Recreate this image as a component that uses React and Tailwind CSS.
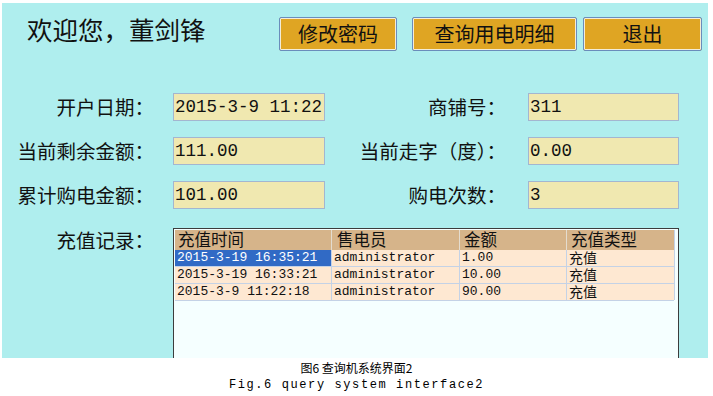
import React from 'react';

const cjk = "font-['Noto_Sans_CJK_SC',sans-serif]";
const tight = "font-['Liberation_Sans','Noto_Sans_CJK_SC',sans-serif]";
const mono = "font-['Liberation_Mono',monospace]";

const records = [
    { time: '2015-3-19 16:35:21', seller: 'administrator', amount: '1.00', type: '充值' },
    { time: '2015-3-19 16:33:21', seller: 'administrator', amount: '10.00', type: '充值' },
    { time: '2015-3-9 11:22:18', seller: 'administrator', amount: '90.00', type: '充值' },
];

const Field = ({ value }) => (
    <div className={`h-[28px] bg-[#F0E8B0] border border-[#a3b6d0] pl-[1px] text-[17.5px] leading-[26px] text-[#111] ${mono}`}>
        {value}
    </div>
);

const Button = ({ label, className }) => (
    <button
        className={`h-[34px] bg-[#DFA523] border border-[#6a8dbb] shadow-[inset_0_0_0_1px_#f3ecd8] rounded-[2px] text-[20px] leading-[30px] text-[#111] ${cjk} ${className}`}
    >
        {label}
    </button>
);

const App = () => {
    return (
        <div className="w-[713px] h-[396px] bg-white overflow-hidden">
            <div className={`ml-[2px] mt-[3px] w-[706px] h-[355px] bg-[#AFEEEE] overflow-hidden text-[#111] ${cjk}`}>
                <div className="flex items-start">
                    <div className="w-[277px] pl-[25px] mt-[11px] text-[25.5px] leading-[30px]">
                        欢迎您，董剑锋
                    </div>
                    <Button label="修改密码" className="mt-[14px] w-[118px]" />
                    <Button label="查询用电明细" className="mt-[14px] ml-[15px] w-[165px]" />
                    <Button label="退出" className="mt-[14px] ml-[6px] w-[119px]" />
                </div>

                <div className="mt-[42px] flex flex-col gap-[16px] text-[19.5px]">
                    <div className="flex items-center">
                        <div className="w-[152px] text-right leading-[28px]">开户日期：</div>
                        <div className="ml-[19px] w-[152px]"><Field value="2015-3-9 11:22" /></div>
                        <div className="w-[181px] text-right leading-[28px]">商铺号：</div>
                        <div className="ml-[22px] w-[151px]"><Field value="311" /></div>
                    </div>
                    <div className="flex items-center">
                        <div className="w-[152px] text-right leading-[28px]">当前剩余金额：</div>
                        <div className="ml-[19px] w-[152px]"><Field value="111.00" /></div>
                        <div className="w-[181px] text-right leading-[28px]">当前走字（度）：</div>
                        <div className="ml-[22px] w-[151px]"><Field value="0.00" /></div>
                    </div>
                    <div className="flex items-center">
                        <div className="w-[152px] text-right leading-[28px]">累计购电金额：</div>
                        <div className="ml-[19px] w-[152px]"><Field value="101.00" /></div>
                        <div className="w-[181px] text-right leading-[28px]">购电次数：</div>
                        <div className="ml-[22px] w-[151px]"><Field value="3" /></div>
                    </div>
                </div>

                <div className="mt-[17px] flex items-start text-[19.5px]">
                    <div className="w-[152px] text-right leading-[28px]">充值记录：</div>
                    <div className="ml-[19px] mt-[2px] w-[506px] h-[140px] border border-[#3c3c3c] border-b-0 bg-[#F5FFFF] p-[1px]">
                        <div className="flex w-[502px]">
                            <div className="w-[499px]">
                                <div className={`grid grid-cols-[157px_128px_107px_107px] h-[20px] bg-[#D6B48A] text-[16.5px] leading-[20px] ${tight}`}>
                                    <div className="pl-[3px] border-r border-[#e4dccf]">充值时间</div>
                                    <div className="pl-[5px] border-r border-[#e4dccf]">售电员</div>
                                    <div className="pl-[4px] border-r border-[#e4dccf]">金额</div>
                                    <div className="pl-[4px]">充值类型</div>
                                </div>
                                {records.map((r, i) => (
                                    <div
                                        key={i}
                                        className="grid grid-cols-[157px_128px_107px_107px] h-[17px] bg-[#FEE8D2] border-b border-[#c4d2e6] leading-[16px]"
                                    >
                                        <div className={`pl-[2px] border-r border-[#c4d2e6] text-[13px] ${mono} ${i === 0 ? 'bg-[#316AC5] text-white' : ''}`}>
                                            {r.time}
                                        </div>
                                        <div className={`pl-[2px] border-r border-[#c4d2e6] text-[13px] ${mono}`}>{r.seller}</div>
                                        <div className={`pl-[2px] border-r border-[#c4d2e6] text-[13px] ${mono}`}>{r.amount}</div>
                                        <div className={`pl-[2px] text-[14px] leading-[16px] ${tight}`}>{r.type}</div>
                                    </div>
                                ))}
                            </div>
                            <div className="w-[3px] h-[70px] border-l border-[#c4d2e6]"></div>
                        </div>
                    </div>
                </div>
            </div>

            <div className="flex flex-col items-center pt-[2px]">
                <div className={`text-[12px] leading-[16px] text-black ${cjk}`}>图6 查询机系统界面2</div>
                <div className={`mt-[1px] text-[12px] leading-[16px] tracking-[1.6px] text-black ${mono}`}>
                    Fig.6 query system interface2
                </div>
            </div>
        </div>
    );
};

export default App;
